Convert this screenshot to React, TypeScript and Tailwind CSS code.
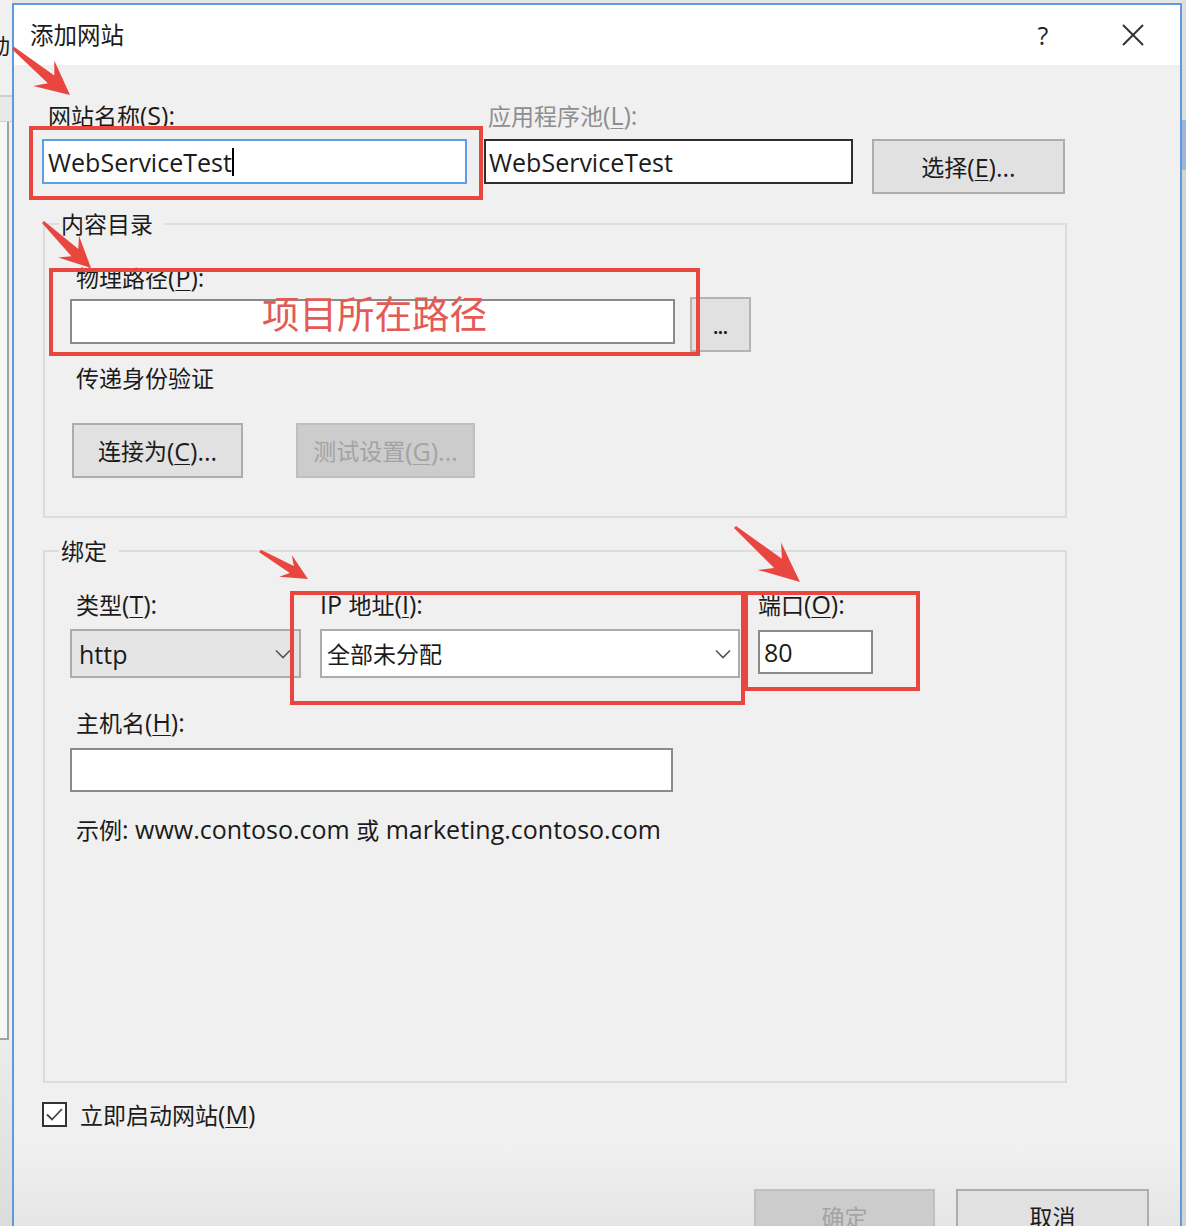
import React from "react";

const U = ({ children }: { children: React.ReactNode }) => (
  <span className="underline underline-offset-[3px] decoration-1">{children}</span>
);

const L = ({ children }: { children: React.ReactNode }) => <span className="text-[25px]">{children}</span>;

type ArrowProps = { x1: number; y1: number; x2: number; y2: number; head: number; hw: number; tw?: number; nw?: number };

function arrowPoints({ x1, y1, x2, y2, head, hw, tw = 3, nw = 10 }: ArrowProps) {
  const dx = x2 - x1;
  const dy = y2 - y1;
  const len = Math.hypot(dx, dy);
  const ux = dx / len;
  const uy = dy / len;
  const px = -uy;
  const py = ux;
  const bx = x2 - ux * head;
  const by = y2 - uy * head;
  const nx = x2 - ux * head * 0.72;
  const ny = y2 - uy * head * 0.72;
  const pts = [
    [x1 + (px * tw) / 2, y1 + (py * tw) / 2],
    [nx + (px * nw) / 2, ny + (py * nw) / 2],
    [bx + (px * hw) / 2, by + (py * hw) / 2],
    [x2, y2],
    [bx - (px * hw) / 2, by - (py * hw) / 2],
    [nx - (px * nw) / 2, ny - (py * nw) / 2],
    [x1 - (px * tw) / 2, y1 - (py * tw) / 2],
  ];
  return pts.map((p) => `${p[0].toFixed(1)},${p[1].toFixed(1)}`).join(" ");
}

const Chevron = () => (
  <svg width="16" height="10" viewBox="0 0 16 10" className="shrink-0">
    <polyline points="1,1.5 8,8.5 15,1.5" fill="none" stroke="#555" strokeWidth="1.6" />
  </svg>
);

export default function App() {
  const arrows: ArrowProps[] = [
    { x1: 13, y1: 48, x2: 70, y2: 95, head: 34, hw: 33 },
    { x1: 43, y1: 222, x2: 91, y2: 268, head: 31, hw: 30 },
    { x1: 260, y1: 551, x2: 308, y2: 579, head: 26, hw: 25, nw: 8 },
    { x1: 735, y1: 527, x2: 800, y2: 582, head: 40, hw: 36, nw: 12 },
  ];

  return (
    <div className="relative w-[1186px] h-[1226px] overflow-hidden flex bg-[#e6e6e6] text-[23px] leading-[30px] text-[#1b1b1b] font-['Open_Sans','Noto_Sans_CJK_SC',sans-serif]">
      {/* background window strip on the left */}
      <div className="w-[12px] h-full flex flex-col bg-[#f0f0f0] overflow-hidden">
        <div className="h-[97px] pt-[30px] border-b-2 border-[#cfcfcf] overflow-hidden">
          <div className="-ml-[12px] text-[22px] leading-[30px]">动</div>
        </div>
        <div className="h-[25px] bg-[#e9e9e9] border-b border-[#cfcfcf]" />
        <div className="h-[918px] w-[9px] bg-[#f6f6f6] border-r-2 border-b-2 border-[#a2a2a2]" />
        <div className="flex-1 bg-gradient-to-b from-[#ececec] to-[#dcdcdc]" />
      </div>

      {/* dialog */}
      <div className="w-[1170px] h-[1223px] mt-[3px] border-2 border-b-0 border-[#5f9ae0] flex flex-col bg-[#f0f0f0]">
        {/* title bar */}
        <div className="h-[60px] bg-white flex items-center shrink-0">
          <div className="pl-[16px] text-[23.5px]">添加网站</div>
          <div className="flex-1" />
          <div className="w-[46px] h-[46px] flex items-center justify-center text-[25px] text-[#222]">?</div>
          <div className="w-[44px]" />
          <div className="w-[46px] h-[46px] flex items-center justify-center">
            <svg width="24" height="24" viewBox="0 0 24 24">
              <line x1="2" y1="2" x2="22" y2="22" stroke="#333" strokeWidth="2" />
              <line x1="22" y1="2" x2="2" y2="22" stroke="#333" strokeWidth="2" />
            </svg>
          </div>
          <div className="w-[24px]" />
        </div>

        {/* body */}
        <div className="flex-1 flex flex-col">
          {/* row 1 */}
          <div className="flex items-start mt-[35px] pl-[28px]">
            <div className="w-[425px] flex flex-col">
              <div className="pl-[6px] h-[30px]">
                网站名称<L>(S):</L>
              </div>
              <div className="mt-[9px] h-[45px] bg-white border-2 border-[#5e9ee6] flex items-center pl-[4px]">
                <L>WebServiceTest</L>
                <span className="w-[2px] h-[28px] bg-black" />
              </div>
            </div>
            <div className="ml-[17px] w-[369px] flex flex-col">
              <div className="pl-[4px] h-[30px] text-[#8e8e8e]">
                应用程序池
                <L>
                  (<U>L</U>):
                </L>
              </div>
              <div className="mt-[9px] h-[45px] bg-white border-2 border-[#2e2e2e] flex items-center pl-[3px]">
                <L>WebServiceTest</L>
              </div>
            </div>
            <button className="ml-[19px] mt-[39px] w-[193px] h-[55px] bg-[#e1e1e1] border-2 border-[#adadad] flex items-center justify-center">
              选择
              <L>
                (<U>E</U>)...
              </L>
            </button>
          </div>

          {/* group: 内容目录 */}
          <fieldset className="ml-[29px] mt-[15px] w-[1024px] border-2 border-[#dcdcdc]">
            <legend className="ml-[14px] pl-[2px] pr-[12px] h-[30px]">内容目录</legend>
            <div className="pl-[31px] mt-[23px] h-[30px]">
              物理路径
              <L>
                (<U>P</U>):
              </L>
            </div>
            <div className="flex items-start mt-[5px] pl-[25px]">
              <div className="mt-[2px] w-[605px] h-[45px] bg-white border-2 border-[#8a8a8a]" />
              <button className="ml-[15px] w-[61px] h-[55px] bg-[#e1e1e1] border-2 border-[#b4b4b4] flex items-center justify-center pt-[6px] text-[17px] font-bold leading-none">
                ...
              </button>
            </div>
            <div className="pl-[31px] mt-[11px] h-[30px]">传递身份验证</div>
            <div className="flex mt-[30px] pl-[27px] pb-[38px]">
              <button className="w-[171px] h-[55px] bg-[#e1e1e1] border-2 border-[#adadad] flex items-center justify-center">
                连接为
                <L>
                  (<U>C</U>)...
                </L>
              </button>
              <button className="ml-[53px] w-[179px] h-[55px] bg-[#cccccc] border-2 border-[#bfbfbf] flex items-center justify-center text-[#a3a3a3]">
                测试设置
                <L>
                  (<U>G</U>)...
                </L>
              </button>
            </div>
          </fieldset>

          {/* group: 绑定 */}
          <fieldset className="ml-[29px] mt-[18px] w-[1024px] border-2 border-[#dcdcdc]">
            <legend className="ml-[14px] pl-[2px] pr-[12px] h-[30px]">绑定</legend>
            <div className="flex items-start mt-[23px] pl-[25px]">
              <div className="w-[231px] flex flex-col">
                <div className="pl-[6px] h-[30px]">
                  类型
                  <L>
                    (<U>T</U>):
                  </L>
                </div>
                <div className="mt-[10px] h-[49px] bg-[#e5e5e5] border-2 border-[#acacac] flex items-center justify-between pl-[7px] pr-[8px]">
                  <L>http</L>
                  <Chevron />
                </div>
              </div>
              <div className="ml-[19px] w-[420px] flex flex-col">
                <div className="h-[30px]">
                  <L>IP </L>地址
                  <L>
                    (<U>I</U>):
                  </L>
                </div>
                <div className="mt-[10px] h-[49px] bg-white border-2 border-[#acacac] flex items-center justify-between pl-[5px] pr-[7px]">
                  <span>全部未分配</span>
                  <Chevron />
                </div>
              </div>
              <div className="ml-[18px] w-[115px] flex flex-col">
                <div className="h-[30px]">
                  端口
                  <L>
                    (<U>O</U>):
                  </L>
                </div>
                <div className="mt-[11px] h-[44px] bg-white border-2 border-[#8a8a8a] flex items-center pl-[4px]">
                  <L>80</L>
                </div>
              </div>
            </div>
            <div className="pl-[31px] mt-[29px] h-[30px]">
              主机名
              <L>
                (<U>H</U>):
              </L>
            </div>
            <div className="ml-[25px] mt-[11px] w-[603px] h-[44px] bg-white border-2 border-[#8a8a8a]" />
            <div className="pl-[31px] mt-[22px] h-[30px]">
              示例<L>: www.contoso.com </L>或<L> marketing.contoso.com</L>
            </div>
            <div className="h-[237px]" />
          </fieldset>

          {/* checkbox */}
          <div className="flex items-center mt-[16px] pl-[28px] h-[30px]">
            <div className="w-[25px] h-[25px] bg-white border-2 border-[#333] flex items-center justify-center">
              <svg width="17" height="13" viewBox="0 0 17 13">
                <polyline points="1,6.5 6,11.5 16,1" fill="none" stroke="#444" strokeWidth="1.8" />
              </svg>
            </div>
            <div className="ml-[13px]">
              立即启动网站
              <L>
                (<U>M</U>)
              </L>
            </div>
          </div>

          {/* footer */}
          <div className="flex-1 mt-[19px] bg-gradient-to-b from-[#f0f0f0] to-[#e3e3e3] flex justify-end items-start pt-[41px] pr-[31px]">
            <button className="w-[181px] h-[55px] bg-[#cccccc] border-2 border-[#bfbfbf] flex items-start justify-center pt-[11px] text-[#a3a3a3]">
              确定
            </button>
            <button className="ml-[21px] w-[193px] h-[55px] bg-[#e1e1e1] border-2 border-[#adadad] flex items-start justify-center pt-[11px]">
              取消
            </button>
          </div>
        </div>
      </div>

      {/* right strip */}
      <div className="w-[4px] h-full flex flex-col bg-[#dedede]">
        <div className="h-[120px]" />
        <div className="h-[50px] bg-[#9fb7d6]" />
        <div className="flex-1 bg-[#d4d4d4]" />
      </div>

      {/* annotations */}
      <div className="absolute left-[29px] top-[126px] w-[454px] h-[74px] border-4 border-[#e8463e]" />
      <div className="absolute left-[49px] top-[268px] w-[651px] h-[88px] border-4 border-[#e8463e]" />
      <div className="absolute left-[290px] top-[591px] w-[455px] h-[114px] border-4 border-[#e8463e]" />
      <div className="absolute left-[744px] top-[591px] w-[176px] h-[100px] border-4 border-[#e8463e]" />
      <div className="absolute left-[262px] top-[290px] text-[37.5px] leading-[44px] text-[#e45a55] font-['Noto_Sans_CJK_SC',sans-serif]">
        项目所在路径
      </div>
      <svg className="absolute left-0 top-0 pointer-events-none" width="1186" height="1226">
        {arrows.map((a, i) => (
          <polygon key={i} points={arrowPoints(a)} fill="#e8463e" />
        ))}
      </svg>
    </div>
  );
}
